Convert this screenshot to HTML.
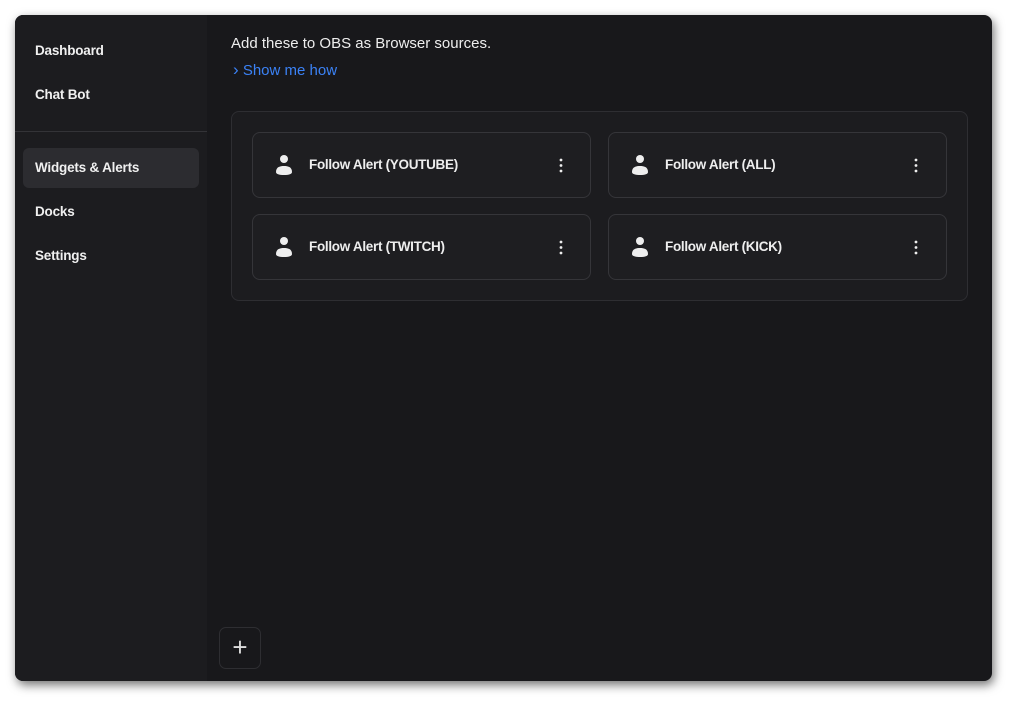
<!DOCTYPE html>
<html><head><meta charset="utf-8"><style>
*{box-sizing:border-box;margin:0;padding:0}
body{width:1012px;height:701px;background:#fff;font-family:"Liberation Sans",sans-serif;position:relative;overflow:hidden}
.win{position:absolute;left:15px;top:15px;width:977px;height:666px;background:#18181b;border-radius:8px;overflow:hidden;box-shadow:2px 4px 10px rgba(0,0,0,.55)}
.side{position:absolute;left:0;top:0;width:192px;height:100%;background:#1c1c1f}
.nav{position:absolute;left:8px;width:176px;height:40px;border-radius:6px;color:#f0f0f0;font-weight:bold;font-size:13.5px;line-height:40px;padding-left:12px;letter-spacing:-0.2px}
.nav.act{background:#2c2c30}
.sep{position:absolute;left:0;top:116px;width:192px;height:1px;background:#333337}
.t1{position:absolute;left:216px;top:20px;color:#eee;font-size:15px}
.t2{position:absolute;left:218px;top:45px;color:#3b82f6;font-size:15px}
.box{position:absolute;left:216px;top:96px;width:737px;height:190px;border:1px solid #2e2e32;border-radius:8px;background:#1c1c1f}
.card{position:absolute;width:339px;height:66px;border:1px solid #353539;border-radius:8px;background:#1e1e21}
.card .lbl{position:absolute;left:56px;top:0;line-height:64px;color:#eee;font-weight:bold;font-size:13.5px;letter-spacing:-0.3px}
.card svg{position:absolute}
.plus{position:absolute;left:204px;top:612px;width:42px;height:42px;border:1px solid #2e2e32;border-radius:7px;color:#ddd;text-align:center;line-height:38px;font-size:26px;font-weight:300}
</style></head><body>
<div class="win">
<div class="side">
<div class="nav" style="top:16px">Dashboard</div>
<div class="nav" style="top:60px">Chat Bot</div>
<div class="sep"></div>
<div class="nav act" style="top:133px">Widgets &amp; Alerts</div>
<div class="nav" style="top:177px">Docks</div>
<div class="nav" style="top:221px">Settings</div>
</div>
<div class="t1">Add these to OBS as Browser sources.</div>
<div class="t2"><span style="font-size:17px;position:relative;top:0px">&#x203A;</span> Show me how</div>
<div class="box">
<div class="card" style="left:20px;top:20px"><svg style="left:22px;top:21px" width="18" height="22" viewBox="0 0 18 22"><circle cx="9" cy="5" r="4" fill="#eee"/><path d="M1 18c0-5 4-6 8-6s8 1 8 6c0 2-3 3-8 3s-8-1-8-3z" fill="#eee"/></svg><div class="lbl">Follow Alert (YOUTUBE)</div><svg style="left:306px;top:25px" width="4" height="15"><circle cx="2" cy="2" r="1.4" fill="#eee"/><circle cx="2" cy="7.5" r="1.4" fill="#eee"/><circle cx="2" cy="13" r="1.4" fill="#eee"/></svg></div>
<div class="card" style="left:376px;top:20px"><svg style="left:22px;top:21px" width="18" height="22" viewBox="0 0 18 22"><circle cx="9" cy="5" r="4" fill="#eee"/><path d="M1 18c0-5 4-6 8-6s8 1 8 6c0 2-3 3-8 3s-8-1-8-3z" fill="#eee"/></svg><div class="lbl">Follow Alert (ALL)</div><svg style="left:305px;top:25px" width="4" height="15"><circle cx="2" cy="2" r="1.4" fill="#eee"/><circle cx="2" cy="7.5" r="1.4" fill="#eee"/><circle cx="2" cy="13" r="1.4" fill="#eee"/></svg></div>
<div class="card" style="left:20px;top:102px"><svg style="left:22px;top:21px" width="18" height="22" viewBox="0 0 18 22"><circle cx="9" cy="5" r="4" fill="#eee"/><path d="M1 18c0-5 4-6 8-6s8 1 8 6c0 2-3 3-8 3s-8-1-8-3z" fill="#eee"/></svg><div class="lbl">Follow Alert (TWITCH)</div><svg style="left:306px;top:25px" width="4" height="15"><circle cx="2" cy="2" r="1.4" fill="#eee"/><circle cx="2" cy="7.5" r="1.4" fill="#eee"/><circle cx="2" cy="13" r="1.4" fill="#eee"/></svg></div>
<div class="card" style="left:376px;top:102px"><svg style="left:22px;top:21px" width="18" height="22" viewBox="0 0 18 22"><circle cx="9" cy="5" r="4" fill="#eee"/><path d="M1 18c0-5 4-6 8-6s8 1 8 6c0 2-3 3-8 3s-8-1-8-3z" fill="#eee"/></svg><div class="lbl">Follow Alert (KICK)</div><svg style="left:305px;top:25px" width="4" height="15"><circle cx="2" cy="2" r="1.4" fill="#eee"/><circle cx="2" cy="7.5" r="1.4" fill="#eee"/><circle cx="2" cy="13" r="1.4" fill="#eee"/></svg></div>
</div>
<div class="plus">+</div>
</div>
</body></html>
